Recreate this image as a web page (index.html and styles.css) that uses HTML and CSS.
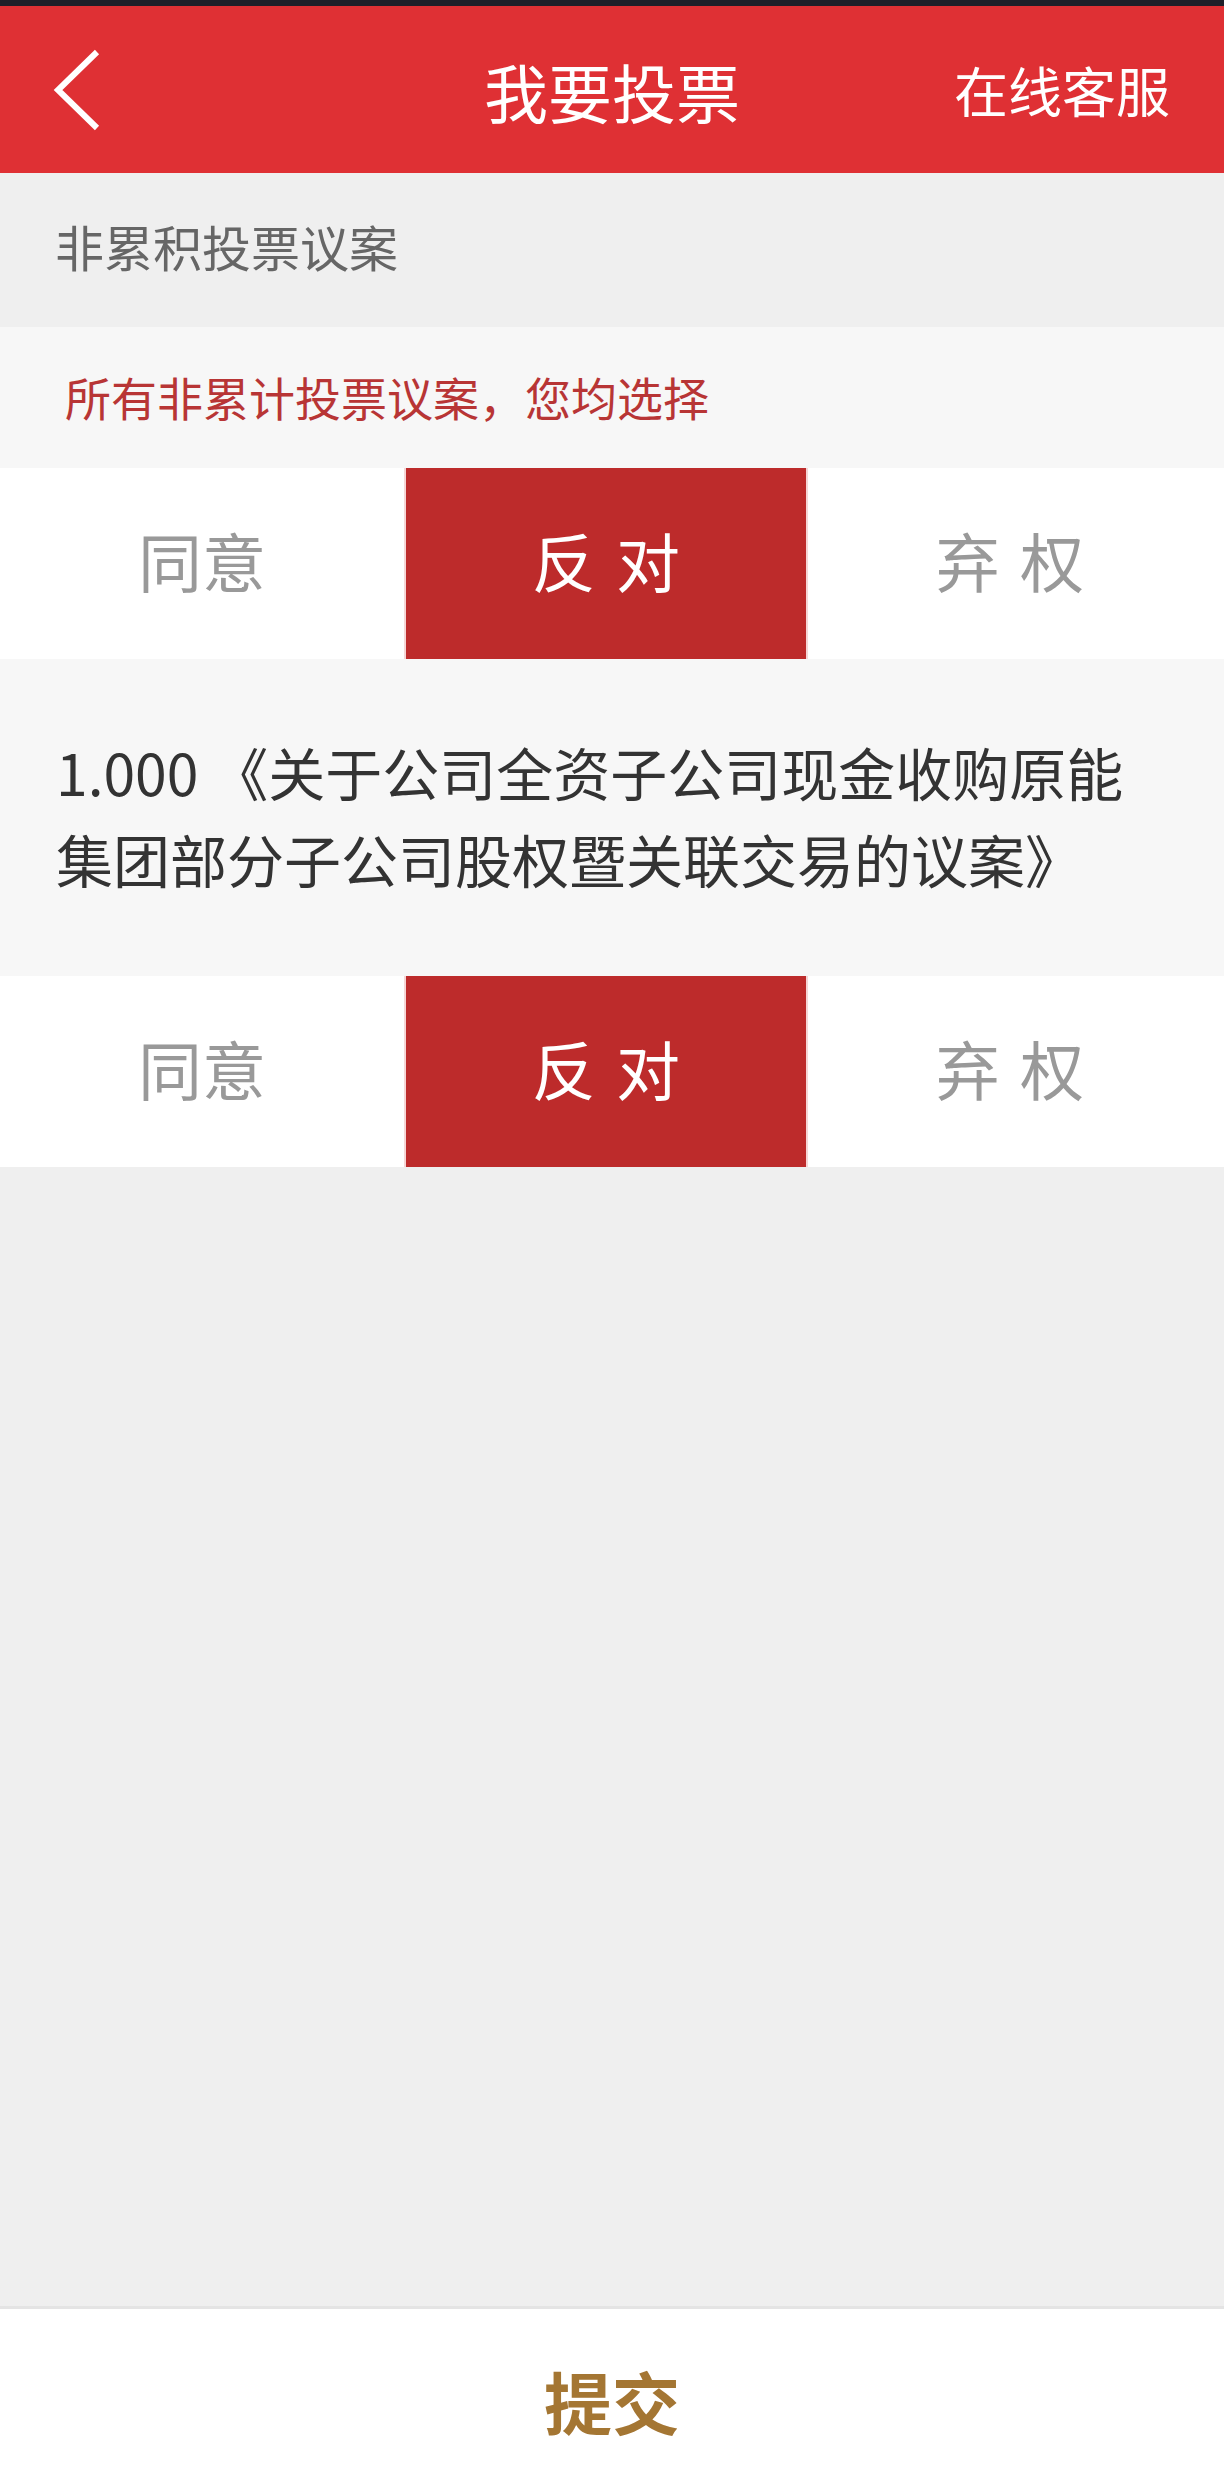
FILE: index.html
```html
<!DOCTYPE html>
<html lang="zh-CN">
<head>
    <meta charset="UTF-8">
    <meta name="viewport" content="width=device-width, initial-scale=1.0">
    <title>我要投票</title>
    <link rel="stylesheet" href="styles.css">
</head>
<body>
    <div class="statusbar"></div>

    <header class="topbar">
        <button class="back" aria-label="返回">
            <svg width="54" height="84" viewBox="0 0 54 84">
                <polyline points="47,4 8,42 47,80" fill="none" stroke="#fff" stroke-width="6"/>
            </svg>
        </button>
        <h1>我要投票</h1>
        <a class="service">在线客服</a>
    </header>

    <main class="content">
        <div class="section-title">非累积投票议案</div>

        <div class="notice">所有非累计投票议案，您均选择</div>
        <div class="vote-row">
            <button class="opt">同意</button>
            <button class="opt active">反 对</button>
            <button class="opt">弃 权</button>
        </div>

        <div class="proposal">1.000 《关于公司全资子公司现金收购原能集团部分子公司股权暨关联交易的议案》</div>
        <div class="vote-row">
            <button class="opt">同意</button>
            <button class="opt active">反 对</button>
            <button class="opt">弃 权</button>
        </div>
    </main>

    <footer class="bottom">
        <button class="submit">提交</button>
    </footer>
</body>
</html>
```

FILE: styles.css
```css
body {
    margin: 0;
    min-height: 100vh;
    display: flex;
    flex-direction: column;
    background-color: #efefef;
    font-family: "Noto Sans CJK SC", "Noto Sans", sans-serif;
}

button {
    font-family: inherit;
    border: none;
    background: none;
    padding: 0;
    cursor: pointer;
}

.statusbar {
    height: 6px;
    background-color: #1f1f29;
}

.topbar {
    height: 167px;
    background-color: #df3034;
    color: #fff;
    display: grid;
    grid-template-columns: 1fr auto 1fr;
    align-items: center;
}

.back {
    justify-self: start;
    margin-left: 50px;
    display: flex;
}

.topbar h1 {
    margin: 0;
    font-size: 64px;
    font-weight: 400;
    line-height: 1;
}

.service {
    justify-self: end;
    margin-right: 54px;
    font-size: 54px;
    line-height: 1;
}

.content {
    flex: 1;
}

.section-title {
    height: 154px;
    box-sizing: border-box;
    display: flex;
    align-items: center;
    padding: 0 0 10px 55px;
    font-size: 49px;
    color: #666;
}

.notice {
    height: 141px;
    box-sizing: border-box;
    display: flex;
    align-items: center;
    padding: 0 0 4px 65px;
    background-color: #f7f7f7;
    font-size: 46px;
    color: #b83535;
}

.vote-row {
    height: 191px;
    display: grid;
    grid-template-columns: 33% 33% 1fr;
    background-color: #fff;
}

.opt {
    font-size: 64px;
    color: #999;
    padding-bottom: 10px;
    word-spacing: 6px;
}

.opt.active {
    background-color: #bd2b2b;
    color: #fff;
    border-left: 2px solid #f5d6d6;
    border-right: 2px solid #f5d6d6;
}

.opt:last-child {
    padding-right: 12px;
}

.proposal {
    height: 317px;
    box-sizing: border-box;
    display: flex;
    align-items: center;
    padding: 0 60px 6px 56px;
    background-color: #f7f7f7;
    font-size: 57px;
    line-height: 87px;
    color: #333;
}

.bottom {
    height: 173px;
    border-top: 3px solid #e4e4e4;
    background-color: #fff;
    display: flex;
    align-items: center;
    justify-content: center;
}

.submit {
    font-size: 68px;
    font-weight: 700;
    color: #a47633;
    margin-top: 10px;
}
```
